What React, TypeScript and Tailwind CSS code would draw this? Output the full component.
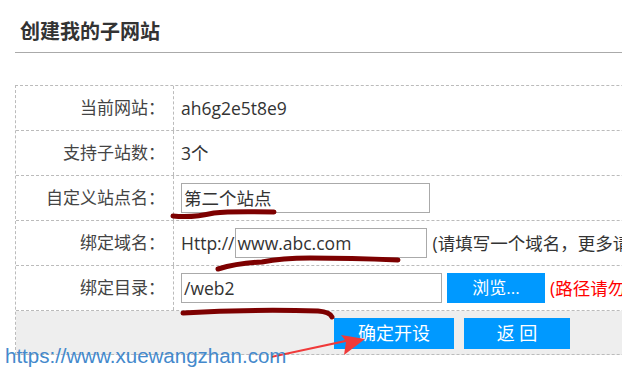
import React from "react";

const font = { fontFamily: '"Open Sans", "Noto Sans CJK SC", sans-serif' };

function Row({ label, children }: { label: string; children: React.ReactNode }) {
  return (
    <div className="flex h-[45px] border-b border-dashed border-[#bbbbbb]">
      <div className="w-[158px] shrink-0 border-r border-dashed border-[#bbbbbb] flex items-center justify-end pr-[8px] text-[17px] text-[#444]">
        {label}
      </div>
      <div className="flex-1 flex items-center pl-[7px] text-[17.5px] text-[#333] whitespace-nowrap">{children}</div>
    </div>
  );
}

export default function App() {
  return (
    <div className="relative w-[622px] h-[371px] overflow-hidden bg-white" style={font}>
      <div className="ml-[15px]">
        {/* Title */}
        <div className="h-[53px] pt-[20px] pl-[5px] border-b border-[#aaaaaa]">
          <h1 className="text-[20px] leading-[24px] font-bold text-[#333]">创建我的子网站</h1>
        </div>

        {/* Form table */}
        <div className="mt-[32px] w-[900px] border-t border-l border-dashed border-[#bbbbbb]">
          <Row label="当前网站：">ah6g2e5t8e9</Row>
          <Row label="支持子站数：">3个</Row>
          <Row label="自定义站点名：">
            <div className="w-[249px] h-[30px] border border-[#aaaaaa] flex items-center px-[2px]">第二个站点</div>
          </Row>
          <Row label="绑定域名：">
            <span>Http://</span>
            <div className="w-[192px] h-[30px] border border-[#aaaaaa] flex items-center px-[2px]">www.abc.com</div>
            <span className="ml-[6px]">(请填写一个域名，更多请到域名绑定里添加)</span>
          </Row>
          <Row label="绑定目录：">
            <div className="w-[261px] h-[30px] border border-[#aaaaaa] flex items-center px-[2px]">/web2</div>
            <button className="ml-[5px] w-[98px] h-[30px] bg-[#0099ff] text-white text-[17px]">浏览...</button>
            <span className="ml-[5px] text-[#ff0000]">(路径请勿使用中文)</span>
          </Row>
          <div className="h-[44px] bg-[#eeeeee] border-b border-dashed border-[#bbbbbb] flex items-start pt-[7px] pl-[318px] gap-[10px]">
            <button className="w-[120px] h-[31px] bg-[#0099ff] text-white text-[18px]">确定开设</button>
            <button className="w-[106px] h-[31px] bg-[#0099ff] text-white text-[18px]">返 回</button>
          </div>
        </div>
      </div>

      {/* Marker scribbles */}
      <svg className="absolute left-0 top-0 pointer-events-none" width="622" height="371" viewBox="0 0 622 371">
        <g fill="none" stroke="#7d0000" strokeWidth="5" strokeLinecap="round" strokeLinejoin="round">
          <path d="M173 216 Q192 218 214 213 Q230 211 274 212" />
          <path d="M218 269 Q238 263 262 262 Q282 258 310 258 Q350 258 398 260" />
          <path d="M183 313 Q250 309 318 311 Q330 312 332 317" />
        </g>
        <path d="M271 358 L346 342 L344 355 L365 339 L341 335 L345 340 L271 356 Z" fill="#f03a3a" />
      </svg>

      {/* Watermark */}
      <div
        className="absolute left-[5px] top-[344px] text-[20.5px] leading-[23px] text-[#4489cc]"
        style={{ fontFamily: '"Liberation Sans", Arial, sans-serif' }}
      >
        https://www.xuewangzhan.com
      </div>
    </div>
  );
}
